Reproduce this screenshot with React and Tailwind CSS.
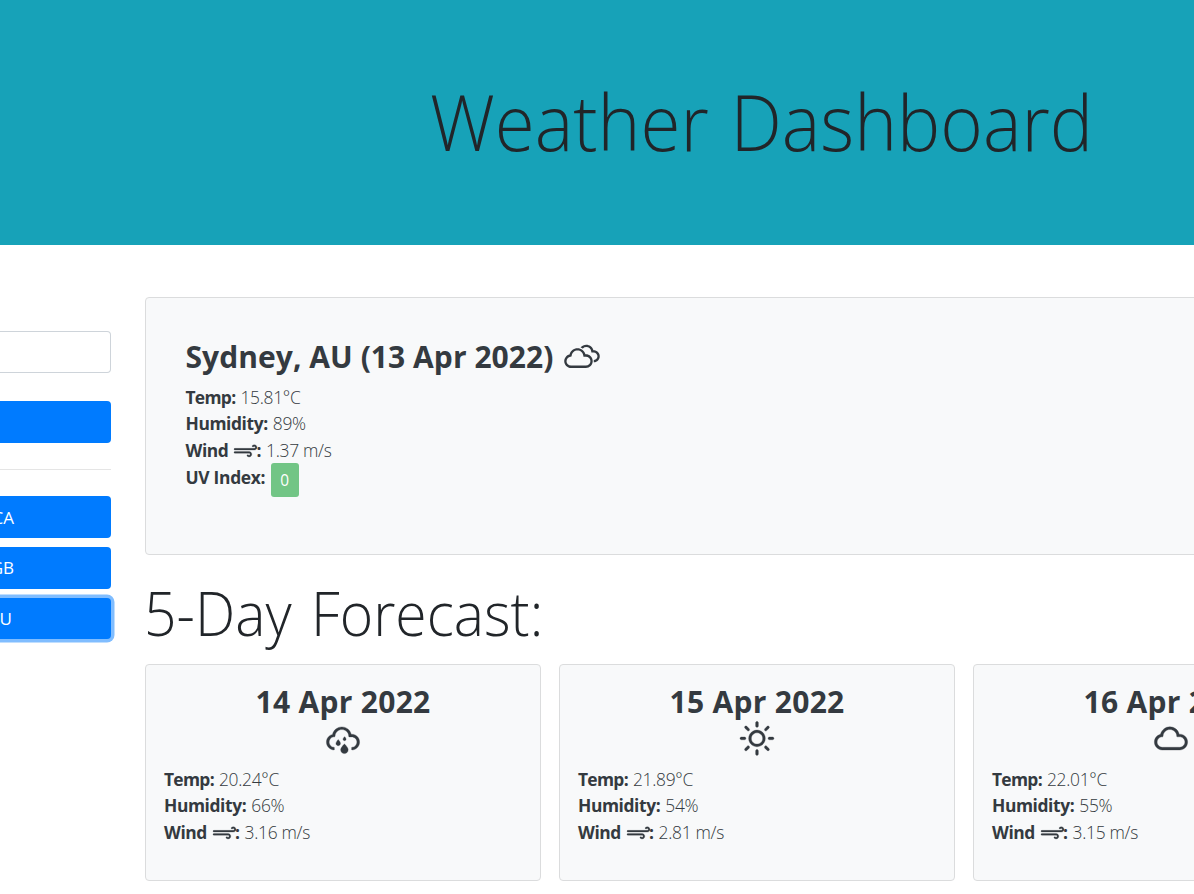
import { WiCloudy, WiCloud, WiDaySunny, WiSprinkle, WiStrongWind } from "react-icons/wi";

const cities = [
  { code: "CA", inset: "pr-[97px]", focused: false },
  { code: "GB", inset: "pr-[97px]", focused: false },
  { code: "AU", inset: "pr-[99px]", focused: true },
];

const days = [
  { date: "14 Apr 2022", Icon: WiSprinkle, temp: "20.24°C", humidity: "66%", wind: "3.16 m/s" },
  { date: "15 Apr 2022", Icon: WiDaySunny, temp: "21.89°C", humidity: "54%", wind: "2.81 m/s" },
  { date: "16 Apr 2022", Icon: WiCloud, temp: "22.01°C", humidity: "55%", wind: "3.15 m/s" },
];

function Row({ label, value, wind }) {
  return (
    <div className="flex h-[26.5px] items-center whitespace-pre text-[17.4px] leading-[26.4px]">
      <span className={"flex items-center font-bold " + (label === "Temp" ? "tracking-[-0.7px]" : "tracking-[-0.4px]")}>
        {label}
        {wind && <WiStrongWind className="mt-px ml-[3px] -mr-[4px] size-[29px] stroke-[0.25]" />}:
      </span>
      <span className="ml-[5px] font-light tracking-[-0.3px]">{value}</span>
    </div>
  );
}

function Conditions({ temp, humidity, wind }) {
  return (
    <>
      <Row label="Temp" value={temp} />
      <Row label="Humidity" value={humidity} />
      <Row label="Wind" value={wind} wind />
    </>
  );
}

export default function App() {
  return (
    <div className="h-[894px] w-full overflow-hidden bg-white font-['Open_Sans',sans-serif] text-[#212529]">
      <header className="h-[245px] bg-[#17a2b8] pt-[74px] pl-[430px]">
        <h1 className="origin-left scale-x-[0.932] text-[78px] leading-[95px] font-light whitespace-nowrap [word-spacing:3px]">
          Weather Dashboard
        </h1>
      </header>
      <div className="flex">
        <aside className="w-[111px] shrink-0 pt-[86px]">
          <div className="h-[42px] rounded-r-[4px] border border-l-0 border-[#ced4da] bg-white" />
          <div className="mt-[28px] h-[42px] rounded-r-[4px] bg-[#007bff]" />
          <hr className="my-[26px] border-t border-[#e5e5e5]" />
          <div className="flex flex-col gap-[9px]">
            {cities.map(({ code, inset, focused }) => (
              <button
                key={code}
                className={
                  "flex h-[41.8px] items-center justify-end rounded-r-[4px] bg-[#007bff] pt-px text-[17px] text-white " +
                  inset +
                  (focused ? " shadow-[0_0_0_3.5px_#80bdff]" : "")
                }
              >
                {code}
              </button>
            ))}
          </div>
        </aside>
        <main className="ml-[34px] w-[1242px] shrink-0 pt-[52px]">
          <section className="h-[258px] rounded-[4px] border border-[#dbdcdd] bg-[#f8f9fa] pt-[40px] pl-[39.5px] text-[#343a40]">
            <h2 className="flex h-[37px] items-center text-[30px] font-bold tracking-[0.05px] whitespace-nowrap">
              Sydney, AU (13 Apr 2022)
              <WiCloudy className="ml-[4.5px] size-[48px]" />
            </h2>
            <div className="mt-[8.5px]">
              <Conditions temp="15.81°C" humidity="89%" wind="1.37 m/s" />
              <div className="mt-[0.5px] flex text-[17.4px] leading-[26.4px]">
                <span className="font-bold tracking-[-0.3px]">UV Index:</span>
                <span className="mt-[-1px] ml-[5.5px] flex h-[34px] w-[28px] items-center justify-center rounded-[3px] bg-[#72c585] pt-[3px] text-[15.4px] text-white">
                  0
                </span>
              </div>
            </div>
          </section>
          <h2 className="mt-[21px] -ml-px h-[88px] origin-left scale-x-[0.935] text-[61px] leading-[74px] font-light whitespace-nowrap [word-spacing:5px]">
            5-Day Forecast:
          </h2>
          <div className="flex gap-[18px]">
            {days.map(({ date, Icon, ...conditions }) => (
              <article
                key={date}
                className="h-[217px] w-[396px] shrink-0 rounded-[4px] border border-[#dbdcdd] bg-[#f8f9fa] px-[18px] pt-[18px] text-[#343a40]"
              >
                <h3 className="text-center text-[30px] leading-[37px] font-bold tracking-[0.3px]">{date}</h3>
                <Icon className="mx-auto mt-[-5px] mb-[2.7px] size-[48px] stroke-[0.2]" />
                <Conditions {...conditions} />
              </article>
            ))}
          </div>
        </main>
      </div>
    </div>
  );
}
